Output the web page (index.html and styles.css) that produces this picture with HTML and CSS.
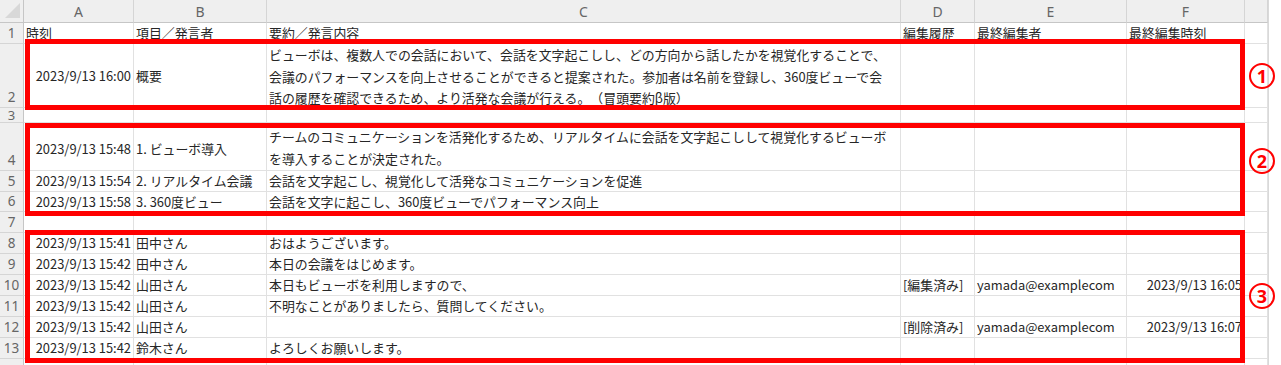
FILE: index.html
```html
<!DOCTYPE html>
<html lang="ja">
<head>
<meta charset="utf-8">
<title>議事録シート</title>
<link rel="stylesheet" href="styles.css">
</head>
<body>
<div class="page">
  <div class="sheet">
    <div class="corner"><span class="tri"></span></div>
    <div class="ch">A</div><div class="ch">B</div><div class="ch">C</div><div class="ch">D</div><div class="ch">E</div><div class="ch">F</div><div class="ch"></div>

    <div class="rh">1</div>
    <div class="c">時刻</div><div class="c">項目／発言者</div><div class="c">要約／発言内容</div><div class="c">編集履歴</div><div class="c">最終編集者</div><div class="c">最終編集時刻</div><div class="c"></div>

    <div class="rh">2</div>
    <div class="c r">2023/9/13 16:00</div><div class="c">概要</div>
    <div class="c multi">ビューボは、複数人での会話において、会話を文字起こしし、どの方向から話したかを視覚化することで、<br>会議のパフォーマンスを向上させることができると提案された。参加者は名前を登録し、360度ビューで会<br>話の履歴を確認できるため、より活発な会議が行える。（冒頭要約β版）</div>
    <div class="c"></div><div class="c"></div><div class="c"></div><div class="c"></div>

    <div class="rh short">3</div>
    <div class="c"></div><div class="c"></div><div class="c"></div><div class="c"></div><div class="c"></div><div class="c"></div><div class="c"></div>

    <div class="rh">4</div>
    <div class="c r low">2023/9/13 15:48</div><div class="c low">1. ビューボ導入</div>
    <div class="c multi b">チームのコミュニケーションを活発化するため、リアルタイムに会話を文字起こしして視覚化するビューボ<br>を導入することが決定された。</div>
    <div class="c"></div><div class="c"></div><div class="c"></div><div class="c"></div>

    <div class="rh">5</div>
    <div class="c r">2023/9/13 15:54</div><div class="c">2. リアルタイム会議</div><div class="c">会話を文字起こし、視覚化して活発なコミュニケーションを促進</div>
    <div class="c"></div><div class="c"></div><div class="c"></div><div class="c"></div>

    <div class="rh">6</div>
    <div class="c r">2023/9/13 15:58</div><div class="c">3. 360度ビュー</div><div class="c">会話を文字に起こし、360度ビューでパフォーマンス向上</div>
    <div class="c"></div><div class="c"></div><div class="c"></div><div class="c"></div>

    <div class="rh">7</div>
    <div class="c"></div><div class="c"></div><div class="c"></div><div class="c"></div><div class="c"></div><div class="c"></div><div class="c"></div>

    <div class="rh">8</div>
    <div class="c r">2023/9/13 15:41</div><div class="c">田中さん</div><div class="c">おはようございます。</div>
    <div class="c"></div><div class="c"></div><div class="c"></div><div class="c"></div>

    <div class="rh">9</div>
    <div class="c r">2023/9/13 15:42</div><div class="c">田中さん</div><div class="c">本日の会議をはじめます。</div>
    <div class="c"></div><div class="c"></div><div class="c"></div><div class="c"></div>

    <div class="rh">10</div>
    <div class="c r">2023/9/13 15:42</div><div class="c">山田さん</div><div class="c">本日もビューボを利用しますので、</div>
    <div class="c">[編集済み]</div><div class="c">yamada@examplecom</div><div class="c r">2023/9/13 16:05</div><div class="c"></div>

    <div class="rh">11</div>
    <div class="c r">2023/9/13 15:42</div><div class="c">山田さん</div><div class="c">不明なことがありましたら、質問してください。</div>
    <div class="c"></div><div class="c"></div><div class="c"></div><div class="c"></div>

    <div class="rh">12</div>
    <div class="c r">2023/9/13 15:42</div><div class="c">山田さん</div><div class="c"></div>
    <div class="c">[削除済み]</div><div class="c">yamada@examplecom</div><div class="c r">2023/9/13 16:07</div><div class="c"></div>

    <div class="rh">13</div>
    <div class="c r">2023/9/13 15:42</div><div class="c">鈴木さん</div><div class="c">よろしくお願いします。</div>
    <div class="c"></div><div class="c"></div><div class="c"></div><div class="c"></div>

    <div class="rh"></div>
    <div class="c"></div><div class="c"></div><div class="c"></div><div class="c"></div><div class="c"></div><div class="c"></div><div class="c"></div>
  </div>

  <div class="mark box1"></div>
  <div class="mark box2"></div>
  <div class="mark box3"></div>
  <span class="num n1">1</span>
  <span class="num n2">2</span>
  <span class="num n3">3</span>
</div>
</body>
</html>
```

FILE: styles.css
```css
* { box-sizing: border-box; }
body {
  margin: 0;
  background: #ffffff;
  font-family: "Noto Sans CJK JP", "Noto Sans", sans-serif;
}
.page {
  position: relative;
  width: 1281px;
  height: 365px;
  overflow: hidden;
  background: #ffffff;
}
.sheet {
  display: grid;
  grid-template-columns: 24px 110px 133px 634px 74px 152px 118px 23px;
  grid-template-rows: 23px 21px 64px 15px 48px 21px 20px 21px 21px 21px 21px 21px 21px 21px 21px;
  width: 1269px;
  border-right: 1px solid #d9d9d9;
}
.corner {
  background: #efefef;
  border-right: 1px solid #c6c6c6;
  border-bottom: 1px solid #c6c6c6;
  display: flex;
  justify-content: flex-end;
  align-items: flex-end;
  padding: 0 3px 4px 0;
}
.tri {
  width: 15px;
  height: 15px;
  background: #d8d8d8;
  clip-path: polygon(100% 0, 100% 100%, 0 100%);
}
.ch {
  background: #efefef;
  border-right: 1px solid #d5d5d5;
  border-bottom: 1px solid #c6c6c6;
  color: #666666;
  font-family: "Noto Sans", sans-serif;
  font-size: 14px;
  display: flex;
  align-items: center;
  justify-content: center;
}
.rh {
  background: #efefef;
  border-right: 1px solid #c6c6c6;
  border-bottom: 1px solid #d5d5d5;
  color: #666666;
  font-family: "Noto Sans", sans-serif;
  font-size: 13.5px;
  display: flex;
  align-items: flex-end;
  justify-content: center;
  line-height: 20px;
  overflow: hidden;
}
.rh.short {
  align-items: center;
  font-size: 13px;
  line-height: 14px;
  overflow: visible;
}
.c {
  border-right: 1px solid #e1e1e1;
  border-bottom: 1px solid #e1e1e1;
  display: flex;
  align-items: center;
  padding: 0 2px;
  font-size: 12.9px;
  line-height: 21.5px;
  color: #262626;
  white-space: nowrap;
  overflow: hidden;
  text-spacing-trim: space-all;
}
.c.r { justify-content: flex-end; }
.c.b { align-items: flex-end; }
.c.low { padding-top: 5px; }
.c.multi { display: block; padding-top: 0; }
.c.multi.b { padding-top: 3px; }

.mark {
  position: absolute;
  left: 25px;
  width: 1220px;
  border: 5px solid #ff0000;
}
.box1 { top: 39px; height: 71px; }
.box2 { top: 123px; height: 93px; }
.box3 { top: 230px; height: 133px; }

.num {
  position: absolute;
  left: 1249px;
  width: 26px;
  height: 26px;
  border: 2px solid #ff0000;
  border-radius: 50%;
  color: #ff0000;
  font-family: "Noto Sans", sans-serif;
  font-weight: 700;
  font-size: 18px;
  line-height: 22px;
  text-align: center;
}
.n1 { top: 63px; }
.n2 { top: 148px; }
.n3 { top: 283px; }
```
